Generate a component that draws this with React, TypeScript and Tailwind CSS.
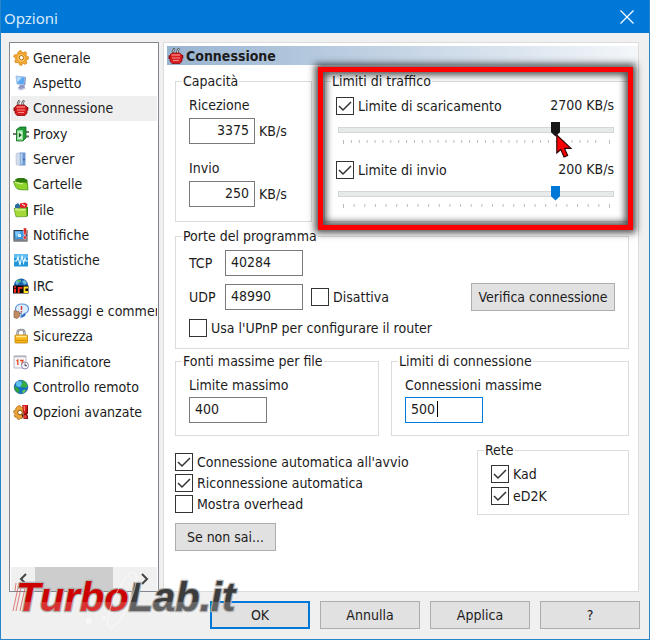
import { useState } from "react"
import type { InputHTMLAttributes, ReactNode } from "react"
import clsx from "clsx"

function GearIcon() {
    return (
        <svg viewBox="0 0 16 16" className="size-4 shrink-0">
            <g stroke="#c87a12" strokeWidth="0.6" fill="#f5a832">
                <path d="M6 1l2-.5 1 1.800 1.700.3L12.300 1.600l1.500 1.600-.8 1.700.8 1.300 1.700.6v2.200l-1.800.9-.4 1.400.7 1.800-1.800 1.300-1.600-.8-1.500.5L8.700 15.500l-2.200-.4-.5-1.800-1.400-.8-1.900.4L1.600 11l1.100-1.500-.3-1.500L.600 6.800l.7-2 2-.1 1-1.200z" />
                <circle cx="8.200" cy="8" r="4.300" fill="#ffc963" stroke="#d98b1c" />
                <circle cx="8.400" cy="7.700" r="2.200" fill="#fff" stroke="#b86a08" strokeWidth="1" />
            </g>
        </svg>
    )
}

function DisplayIcon() {
    return (
        <svg viewBox="0 0 16 16" className="size-4 shrink-0">
            <path d="M3 1l9 1-1 8-7-1z" fill="#58a8f4" stroke="#b3c7e6" />
            <path d="M4 2l5 .6-4.500 5z" fill="#b8e0ff" />
            <path d="M7 10h4l1.500 3.500L8 15l-3-2z" fill="#9298c4" />
            <path d="M5 13l3 1 4-1.500V14l-4 1.500-3-1z" fill="#c6cbe4" />
            <path d="M12 2l1 .6-.8 8-1.200-.4z" fill="#7a8fc0" />
        </svg>
    )
}

function PlugIcon() {
    return (
        <svg viewBox="0 0 16 16" className="size-4 shrink-0">
            <path d="M5 6V3L6.500.5M9.500 6V3L11 .5" fill="none" stroke="#444" strokeWidth="2.200" />
            <path d="M5 5.500V3L6.300 1M9.500 5.500V3l1.300-2" fill="none" stroke="#e4e4e4" strokeWidth="0.9" />
            <path d="M.5 7.500h2v3.500h-2zM13 7h2.300v3.500H13z" fill="#9b1111" />
            <path d="M2 7l2-2h7.500L14 7v6l-2 2.500H4L2 13z" fill="#d81e20" stroke="#8d0b0e" strokeWidth="0.8" />
            <path d="M3.500 7h8.500" stroke="#ff8a82" strokeWidth="1.300" />
            <path d="M4 10h8M5 12.500h6" stroke="#f89a94" strokeWidth="0.9" />
        </svg>
    )
}

function ProxyIcon() {
    return (
        <svg viewBox="0 0 16 16" className="size-4 shrink-0">
            <path d="M0 8h4M12 6h4M12 10.500h4" stroke="#6f7a70" strokeWidth="1.800" />
            <path d="M3.500 3.500L7 1h6v11l-3 3H3.500z" fill="#1f9a35" stroke="#11671f" strokeWidth="0.8" />
            <path d="M4 4h6v10.500H4z" fill="#7ed487" />
            <path d="M4.800 5.500h4.400v7.500H4.800z" fill="#d7f5d6" />
            <path d="M5.800 6.500l3 2.600-3 2.600z" fill="#115f1e" />
        </svg>
    )
}

function ServerIcon() {
    return (
        <svg viewBox="0 0 16 16" className="size-4 shrink-0">
            <path d="M3 2.500L7 1.500v13L3 13.500z" fill="#d2dcea" stroke="#aab8cc" strokeWidth="0.5" />
            <path d="M7 1.500h5.500v13H7z" fill="#6f9ad2" />
            <path d="M7.500 2.500h2v11h-2z" fill="#b2d0f4" />
            <circle cx="11" cy="8.500" r="0.900" fill="#2d5fa8" />
        </svg>
    )
}

function FolderIcon() {
    return (
        <svg viewBox="0 0 16 16" className="size-4 shrink-0">
            <path d="M2 3.500L5 2h6l3.500 2v8.500L5 13z" fill="#2c7a0c" />
            <path d="M.5 5.500C3 4.500 6 7 9 6.300c2.500-.3 4 0 5.500 1.200l.5 6.500c-4-.5-8 .5-11-1.300C2.500 11.500 1.500 8.500.5 5.500z" fill="#8ed32a" stroke="#3c8a10" strokeWidth="0.7" />
            <path d="M2 6.500c3 0 5 1.800 8 1" stroke="#d5f593" fill="none" strokeWidth="1.200" />
        </svg>
    )
}

function FileIcon() {
    return (
        <svg viewBox="0 0 16 16" className="size-4 shrink-0">
            <path d="M2 3l3-2 1.500 2L8 1v5H2z" fill="#2d6aa0" />
            <path d="M7 1.500l5-1 2.500 1.500-.5 4H7z" fill="#e2242a" />
            <path d="M9 2l3 2" stroke="#fff" />
            <path d="M13 5h2v9l-2 .500z" fill="#3c8a10" />
            <path d="M1 6.500l4 .5 1-1 7.500.5.5 8L3 14.800z" fill="#a5d938" stroke="#549a18" strokeWidth="0.7" />
            <path d="M2 7.500l3.500.5 7-.3" stroke="#e3f7a6" fill="none" strokeWidth="1.200" />
        </svg>
    )
}

function NotifyIcon() {
    return (
        <svg viewBox="0 0 16 16" className="size-4 shrink-0">
            <path d="M.5 3h14v11.500H.5z" fill="#30343c" />
            <path d="M1.500 4h11v8h-11z" fill="#3b9ae0" />
            <path d="M2 4.500h6L3 11z" fill="#7cc6f8" />
            <path d="M5 7h3v3H5z" fill="#d7effd" />
            <path d="M1 13h13" stroke="#c6cbd2" />
            <path d="M10.300 1h3.400l-.7 7h-2z" fill="#e3201d" stroke="#fff" strokeWidth="0.5" />
            <circle cx="12" cy="10.500" r="1.700" fill="#e3201d" stroke="#fff" strokeWidth="0.5" />
        </svg>
    )
}

function StatsIcon() {
    return (
        <svg viewBox="0 0 16 16" className="size-4 shrink-0">
            <path d="M1 2h14v12.500H1z" fill="#2196d8" />
            <path d="M1 2h14v4H1z" fill="#61bdf0" />
            <path d="M1 9h2.500L5 5l2 8 2-9.500L10.500 11 12 6.500 13 9h2" fill="none" stroke="#e2f7ff" strokeWidth="1.200" />
        </svg>
    )
}

function IrcIcon() {
    return (
        <svg viewBox="0 0 16 16" className="size-4 shrink-0">
            <circle cx="8" cy="7.500" r="7" fill="#1863b0" />
            <path d="M3 3c3-3 5-1 5 0s-2 1-3 3-3 0-2-3M9 3l3-1 2 3-3 2z" fill="#6fb7d8" />
            <path d="M5 1.500l3 1-1 1.500-3-.5z" fill="#57b84c" />
            <path d="M0 7.500h15.500v8H0z" fill="#120505" />
            <path d="M2 8.200v1.500M2 10.700v4.100" stroke="#ff2a22" strokeWidth="2" />
            <path d="M5.700 15V9.800h3.800" stroke="#ff2a22" strokeWidth="1.800" fill="none" />
            <path d="M15 9.500h-3.500v4.500H15" stroke="#ffe21f" strokeWidth="1.800" fill="none" />
        </svg>
    )
}

function MessageIcon() {
    return (
        <svg viewBox="0 0 16 16" className="size-4 shrink-0">
            <path d="M9 1c4 0 6.500 2 6.500 5 0 2.500-2 4-4 4.500L8 14l.4-3.400C5 10.500 2.500 9 2.500 6S5 1 9 1z" fill="#dceeff" stroke="#5b93d8" strokeWidth="1.100" />
            <path d="M8.500 3v4M8.500 8v1.500" stroke="#e0392c" strokeWidth="1.400" />
            <path d="M1 8l1.500-1 1.500 2 1.500-1L7 10l-.5 3.500L4 15.500l-3-1z" fill="#c08a62" stroke="#80583a" strokeWidth="0.6" />
            <path d="M9 12.500l4-2.500-1 3-4 2z" fill="#2b6bc4" />
        </svg>
    )
}

function LockIcon() {
    return (
        <svg viewBox="0 0 16 16" className="size-4 shrink-0">
            <path d="M4.500 8V4.500C4.500 .8 11.500 .8 11.500 4.500V8" fill="none" stroke="#777c84" strokeWidth="2.200" />
            <path d="M4.500 8V4.500C4.500 1 11.500 1 11.500 4.500V8" fill="none" stroke="#d5d8dd" strokeWidth="0.8" />
            <rect x="2" y="7" width="12.500" height="8" rx="0.800" fill="#f7b81c" stroke="#b97c08" strokeWidth="0.8" />
            <path d="M3 8.500h10.500" stroke="#ffe88a" strokeWidth="1.500" />
            <path d="M3 12.500h10.500" stroke="#dd960b" strokeWidth="1.200" />
        </svg>
    )
}

function CalendarIcon() {
    return (
        <svg viewBox="0 0 16 16" className="size-4 shrink-0">
            <path d="M1 2h12v12H1z" fill="#f6f6fa" stroke="#a9a9b8" strokeWidth="0.800" />
            <path d="M1.500 2.500h11" stroke="#888896" strokeWidth="1.600" strokeDasharray="1 1" />
            <path d="M3.500 7l1.300-1v5M7 6.500h3l-1.500 4.500" stroke="#e44a1f" strokeWidth="1.300" fill="none" />
            <circle cx="12" cy="11.500" r="3.500" fill="#f4f4ff" stroke="#8f8cb0" />
            <path d="M12 9.500v2.200h2" stroke="#333" strokeWidth="0.9" fill="none" />
        </svg>
    )
}

function GlobeIcon() {
    return (
        <svg viewBox="0 0 16 16" className="size-4 shrink-0">
            <circle cx="8" cy="8" r="6.800" fill="#1470c4" stroke="#0d4a8c" strokeWidth="0.600" />
            <circle cx="6" cy="5" r="3" fill="#5dc3ee" />
            <path d="M8 1.500l4 1 2.500 3.500-1.500 3-2.500-1L9 9 8 6l2-1.500z" fill="#35b03c" />
            <path d="M1.500 7l3 1.500 2 2.500-1 3C3 13 1.200 10 1.500 7z" fill="#2fa33a" />
            <path d="M9 12l3-1.500 1 1-3 3z" fill="#62ce4d" />
        </svg>
    )
}

function AdvancedIcon() {
    return (
        <svg viewBox="0 0 16 16" className="size-4 shrink-0">
            <path d="M5 2l2-.5.8 1.800L10 3v10l-1 1.500-2-.2-.8 1.200-2-.6L4 13l-2 .2-.9-2L2.500 10 .5 8.500 1 6.500l2-.3L2.700 4z" fill="#eda43a" stroke="#a8660d" strokeWidth="0.700" />
            <circle cx="7" cy="8.500" r="2.300" fill="#fff" stroke="#8f5208" />
            <path d="M9.500 1H15v8.500l-1 1 1 1.500v3h-4.500V10z" fill="#7e0d0d" />
            <path d="M9.500 1h4.700l-.9 8.500h-2.500z" fill="#dc1c1c" />
            <path d="M10.500 2h1.200l.2 5h-.8z" fill="#ff9a90" />
            <circle cx="12.200" cy="12.700" r="1.700" fill="#f03a34" />
            <path d="M8.500 10l2 1-1 3z" fill="#3a2208" />
        </svg>
    )
}

const pages = [
    { name: "Generale", icon: <GearIcon /> },
    { name: "Aspetto", icon: <DisplayIcon /> },
    { name: "Connessione", icon: <PlugIcon /> },
    { name: "Proxy", icon: <ProxyIcon /> },
    { name: "Server", icon: <ServerIcon /> },
    { name: "Cartelle", icon: <FolderIcon /> },
    { name: "File", icon: <FileIcon /> },
    { name: "Notifiche", icon: <NotifyIcon /> },
    { name: "Statistiche", icon: <StatsIcon /> },
    { name: "IRC", icon: <IrcIcon /> },
    { name: "Messaggi e commenti", icon: <MessageIcon /> },
    { name: "Sicurezza", icon: <LockIcon /> },
    { name: "Pianificatore", icon: <CalendarIcon /> },
    { name: "Controllo remoto", icon: <GlobeIcon /> },
    { name: "Opzioni avanzate", icon: <AdvancedIcon /> },
]

function Group({ title, className, children }: { title: string; className?: string; children: ReactNode }) {
    return (
        <fieldset className="min-w-0 border border-[#dcdcdc]">
            <legend className="ml-1.5 px-px">{title}</legend>
            <div className={clsx("flex flex-col", className)}>{children}</div>
        </fieldset>
    )
}

function Checkbox({ label, checked = false }: { label: string; checked?: boolean }) {
    return (
        <label className="flex items-center gap-1 whitespace-nowrap">
            <span className="relative size-[18px] shrink-0">
                <input
                    type="checkbox"
                    defaultChecked={checked}
                    className="peer block size-[18px] appearance-none border border-[#333] bg-white"
                />
                <svg viewBox="0 0 18 18" className="pointer-events-none absolute inset-0 hidden peer-checked:block">
                    <path d="M3 9l4 4 8-8" fill="none" stroke="#333" strokeWidth="1.500" />
                </svg>
            </span>
            {label}
        </label>
    )
}

function TextBox({ className, ...rest }: InputHTMLAttributes<HTMLInputElement>) {
    return (
        <input
            type="text"
            className={clsx("h-[26px] border bg-white px-[5px] pb-0.5 outline-none", className)}
            {...rest}
        />
    )
}

function Button({ children, className }: { children: ReactNode; className?: string }) {
    return (
        <button type="button" className={clsx("h-7 bg-[#e1e1e1] text-center whitespace-nowrap", className)}>
            {children}
        </button>
    )
}

function LimitSlider({ label, max, start, step, active, children }: {
    label: string
    max: number
    start: number
    step: number
    active?: boolean
    children?: ReactNode
}) {
    const [value, setValue] = useState(start)
    const ticks = Array.from({ length: Math.floor(max / step) }, (_, i) => (i * step) / max)

    return (
        <div>
            <div className="flex h-5 items-center justify-between">
                <Checkbox label={label} checked />
                <span className="pb-0.5">{value} KB/s</span>
            </div>
            <div className="relative mt-1.5 ml-0.5">
                <input
                    type="range"
                    aria-label={label}
                    min={0}
                    max={max}
                    value={value}
                    onChange={(e) => setValue(Number(e.target.value))}
                    className={clsx(
                        "block h-[15px] w-full appearance-none bg-transparent",
                        "[&::-webkit-slider-runnable-track]:h-1.5 [&::-webkit-slider-runnable-track]:border [&::-webkit-slider-runnable-track]:border-[#d6d6d6] [&::-webkit-slider-runnable-track]:bg-[#e7eaea]",
                        "[&::-webkit-slider-thumb]:-mt-1.5 [&::-webkit-slider-thumb]:h-[15px] [&::-webkit-slider-thumb]:w-[9px] [&::-webkit-slider-thumb]:appearance-none [&::-webkit-slider-thumb]:[clip-path:polygon(0_0,100%_0,100%_72%,50%_100%,0_72%)]",
                        active
                            ? "[&::-webkit-slider-thumb]:bg-[#171717]"
                            : "[&::-webkit-slider-thumb]:bg-[#0078d7]"
                    )}
                />
                <svg className="mt-[3px] block h-1 w-full px-[5px]" overflow="visible">
                    {ticks.map((t) => (
                        <rect key={t} x={`${t * 100}%`} y="0" width="1" height={t === 0 ? 4 : 3} fill="#bdbdbd" />
                    ))}
                    <rect x="100%" y="0" width="1" height="4" fill="#bdbdbd" />
                </svg>
                {children}
            </div>
        </div>
    )
}

function Logo() {
    return (
        <svg viewBox="0 0 232 64" className="pointer-events-none absolute bottom-[9px] left-[9px] h-16 w-[232px]" aria-label="TurboLab.it">
            <defs>
                <linearGradient id="logo-red" x1="0" y1="0" x2="0" y2="1">
                    <stop offset="0.620" stopColor="#cc0000" />
                    <stop offset="0.620" stopColor="#d93030" />
                </linearGradient>
                <linearGradient id="logo-gray" x1="0" y1="0" x2="0" y2="1">
                    <stop offset="0.620" stopColor="#3c3c3c" />
                    <stop offset="0.620" stopColor="#626262" />
                </linearGradient>
            </defs>
            <g stroke="#d94a4a" strokeWidth="1" opacity="0.7">
                <path d="M6 17l-1 8M9 17L3 45M12 17L6 45M15 22l-5 23" />
            </g>
            <text
                x="6"
                y="45"
                fontFamily="Liberation Sans, sans-serif"
                fontSize="40"
                fontWeight="700"
                fontStyle="italic"
                stroke="#b0b0b0"
                strokeWidth="2.500"
                strokeLinejoin="round"
                paintOrder="stroke"
            >
                <tspan fill="url(#logo-red)">Turbo</tspan>
                <tspan fill="url(#logo-gray)">Lab.it</tspan>
            </text>
            <ellipse cx="112" cy="34" rx="8" ry="30" transform="rotate(24 112 34)" fill="none" stroke="#fff" strokeWidth="1.200" opacity="0.500" />
            <circle cx="79" cy="55" r="3" fill="#fff" opacity="0.500" />
            <circle cx="94" cy="52" r="2" fill="#fff" opacity="0.500" />
        </svg>
    )
}

export default function App() {
    return (
        <div className="relative flex min-h-screen flex-col border border-t-0 border-[#2a84c8] bg-[#f0f0f0] font-['DejaVu_Sans_Condensed','Noto_Sans',sans-serif] text-[14px] leading-5 text-[#1c1c1c]">
            <header className="flex h-[33px] items-center justify-between bg-[#0078d7] pr-[15px] pl-[3px] text-[#d9eafa]">
                <h1 className="pt-0.5 font-['Noto_Sans',sans-serif] text-[15px]">Opzioni</h1>
                <button type="button" aria-label="Chiudi">
                    <svg viewBox="0 0 14 14" className="size-3.5">
                        <path d="M.5 .5l13 13M13.500 .5l-13 13" stroke="#fff" strokeWidth="1.200" />
                    </svg>
                </button>
            </header>

            <div className="flex flex-1 gap-1 pt-[9px] pr-2.5 pl-2">
                <nav className="flex w-[150px] shrink-0 flex-col justify-between border border-[#828790] bg-white px-px pt-0.5">
                    <ul className="grid h-[380px] auto-rows-fr grid-cols-1">
                        {pages.map((page) => (
                            <li key={page.name} className={clsx("flex min-w-0", page.name === "Connessione" && "bg-[#efefef]")}>
                                <a href="#" className="flex min-w-0 flex-1 items-center gap-1 overflow-hidden pl-0.5 whitespace-nowrap">
                                    {page.icon}
                                    {page.name}
                                </a>
                            </li>
                        ))}
                    </ul>
                    <div className="flex h-6 bg-[#f0f0f0]">
                        <button type="button" aria-label="Scorri a sinistra" className="grid w-6 place-items-center">
                            <svg viewBox="0 0 10 12" className="h-3 w-2.5">
                                <path d="M8 1L3 6l5 5" fill="none" stroke="#444" strokeWidth="2" />
                            </svg>
                        </button>
                        <div className="w-[78px] bg-[#cdcdcd]" />
                        <button type="button" aria-label="Scorri a destra" className="ml-auto grid w-6 place-items-center">
                            <svg viewBox="0 0 10 12" className="h-3 w-2.5">
                                <path d="M2 1l5 5-5 5" fill="none" stroke="#444" strokeWidth="2" />
                            </svg>
                        </button>
                    </div>
                </nav>

                <main className="flex-1 border border-[#dcdcdc] bg-white pt-[3px] pl-[3px]">
                    <h2 className="flex h-[19px] items-center gap-0.5 bg-linear-to-r from-[#99b4d1] to-[#f4f7fa] pl-px font-bold">
                        <PlugIcon />
                        Connessione
                    </h2>

                    <div className="pt-1.5 pr-[9px] pl-2">
                        <div className="grid grid-cols-[137px_1fr] gap-3">
                            <Group title="Capacità" className="gap-3.5 px-[13px] pt-1 pb-3.5">
                                <div>
                                    <label htmlFor="download">Ricezione</label>
                                    <div className="mt-[3px] flex items-center gap-1">
                                        <TextBox id="download" defaultValue="3375" className="w-[66px] border-[#7a7a7a] text-right" />
                                        KB/s
                                    </div>
                                </div>
                                <div>
                                    <label htmlFor="upload">Invio</label>
                                    <div className="mt-[3px] flex items-center gap-1">
                                        <TextBox id="upload" defaultValue="250" className="w-[66px] border-[#7a7a7a] text-right" />
                                        KB/s
                                    </div>
                                </div>
                            </Group>

                            <div className="relative grid">
                                <Group title="Limiti di traffico" className="gap-4 pt-[5px] pr-3.5 pl-[11px]">
                                    <LimitSlider label="Limite di scaricamento" max={3375} start={2700} step={100} active>
                                        <svg viewBox="0 0 17 24" className="pointer-events-none absolute top-3 left-[79%] h-6 w-[17px]">
                                            <path d="M.8 1v18l4-3.500 3.200 7.500 3.700-1.600-3.200-7h6.500z" fill="#fb0007" stroke="#2a0000" strokeWidth="1.100" />
                                        </svg>
                                    </LimitSlider>
                                    <LimitSlider label="Limite di invio" max={250} start={200} step={10} />
                                </Group>
                                <div className="pointer-events-none absolute -top-1 -right-1 -bottom-2 -left-1.5 border-[5px] border-[#fe0000] shadow-[0_0_7px_3px_rgba(0,0,0,0.7),inset_0_0_7px_3px_rgba(0,0,0,0.7)]" />
                            </div>
                        </div>

                        <div className="mt-1">
                            <Group title="Porte del programma" className="gap-2 px-[13px] pt-1 pb-2.5">
                                <div className="flex items-center">
                                    <label htmlFor="tcp" className="w-9">TCP</label>
                                    <TextBox id="tcp" defaultValue="40284" className="w-[78px] border-[#7a7a7a]" />
                                </div>
                                <div className="flex h-[26px] items-center">
                                    <label htmlFor="udp" className="w-9">UDP</label>
                                    <TextBox id="udp" defaultValue="48990" className="mr-2 w-[78px] border-[#7a7a7a]" />
                                    <Checkbox label="Disattiva" />
                                    <Button className="ml-auto w-36 border border-[#adadad]">Verifica connessione</Button>
                                </div>
                                <Checkbox label="Usa l'UPnP per configurare il router" />
                            </Group>
                        </div>

                        <div className="mt-0.5 grid grid-cols-[204px_1fr] gap-3">
                            <Group title="Fonti massime per file" className="gap-0.5 px-[13px] pt-1 pb-3">
                                <label htmlFor="sources">Limite massimo</label>
                                <TextBox id="sources" defaultValue="400" className="w-[78px] border-[#7a7a7a]" />
                            </Group>
                            <Group title="Limiti di connessione" className="gap-0.5 px-[13px] pt-1 pb-3">
                                <label htmlFor="connections">Connessioni massime</label>
                                <div className="relative">
                                    <TextBox id="connections" defaultValue="500" className="block w-[78px] border-[#0078d7]" />
                                    <span className="absolute top-1 left-8 h-4 w-px bg-black" />
                                </div>
                            </Group>
                        </div>

                        <div className="mt-1 grid grid-cols-[1fr_152px] items-start">
                            <div className="mt-3 flex flex-col items-start gap-px">
                                <Checkbox label="Connessione automatica all'avvio" checked />
                                <Checkbox label="Riconnessione automatica" checked />
                                <Checkbox label="Mostra overhead" />
                                <Button className="mt-2 w-[101px] border border-[#adadad]">Se non sai...</Button>
                            </div>
                            <Group title="Rete" className="gap-0.5 px-[13px] pt-1 pb-2">
                                <Checkbox label="Kad" checked />
                                <Checkbox label="eD2K" checked />
                            </Group>
                        </div>
                    </div>
                </main>
            </div>

            <footer className="flex justify-end gap-2.5 pt-[9px] pr-[9px] pb-2.5">
                <Button className="w-[100px] border-2 border-[#0078d7]">OK</Button>
                <Button className="w-[100px] border border-[#adadad]">Annulla</Button>
                <Button className="w-[100px] border border-[#adadad]">Applica</Button>
                <Button className="w-[100px] border border-[#adadad]">?</Button>
            </footer>

            <Logo />
        </div>
    )
}
